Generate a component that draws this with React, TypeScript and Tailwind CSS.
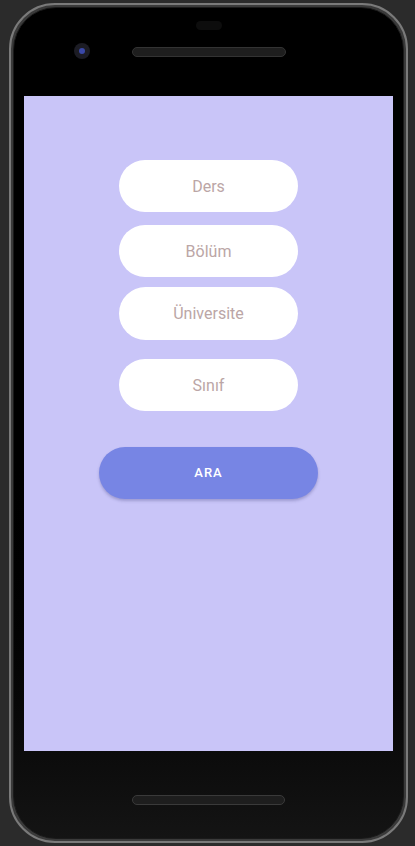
import { useState } from 'react';

const fields = [
  { key: 'ders', label: 'Ders', cls: 'mt-[64px] h-[52px]' },
  { key: 'bolum', label: 'Bölüm', cls: 'mt-[13px] h-[52px]' },
  { key: 'uni', label: 'Üniversite', cls: 'mt-[10px] h-[53px]' },
  { key: 'sinif', label: 'Sınıf', cls: 'mt-[19px] h-[52px]' },
];

function SearchScreen() {
  const [values, setValues] = useState<Record<string, string>>({});

  return (
    <div className="w-[369px] h-[655px] bg-[#c9c5f8] flex flex-col items-center">
      {fields.map((f) => (
        <input
          key={f.key}
          value={values[f.key] || ''}
          onChange={(e) => setValues({ ...values, [f.key]: e.target.value })}
          placeholder={f.label}
          className={`w-[179px] rounded-full bg-white text-center text-[16px] text-[#6b5b5b] placeholder:text-[#bba6a6] outline-none ${f.cls}`}
        />
      ))}
      <button className="mt-[36px] w-[219px] h-[52px] rounded-full bg-[#7785e4] text-white text-[13px] font-medium tracking-[0.08em] shadow-[0_2px_3px_rgba(60,60,120,0.3)]">
        ARA
      </button>
    </div>
  );
}

export default function App() {
  return (
    <div
      className="w-[415px] h-[846px] bg-[#2b2b2b] flex overflow-hidden"
      style={{ fontFamily: 'Roboto, "Noto Sans", sans-serif' }}
    >
      <div className="ml-[9px] mt-[3px] w-[399px] h-[840px] rounded-[46px] border-2 border-[#7a7a7a] bg-[#3a3a3a] p-[2px]">
        <div className="w-full h-full rounded-[43px] bg-gradient-to-b from-black via-black to-[#141414] border border-[#1a1a1a] flex flex-col items-center">
          {/* top bezel */}
          <div className="w-full h-[88px] flex flex-col items-center">
            <div className="mt-[13px] w-[26px] h-[9px] rounded-full bg-[#0d0d0d]" />
            <div className="relative w-full mt-[17px] h-[10px] flex justify-center">
              <div className="absolute left-[60px] top-[-4px] w-[16px] h-[16px] rounded-full bg-[#1c1c24] flex items-center justify-center">
                <div className="w-[6px] h-[6px] rounded-full bg-[#3a48a8]" />
              </div>
              <div className="w-[154px] h-[10px] rounded-full bg-[#1e1e1e] border border-[#333]" />
            </div>
          </div>
          <SearchScreen />
          {/* bottom bezel */}
          <div className="w-full flex justify-center">
            <div className="mt-[44px] w-[153px] h-[10px] rounded-full bg-[#1e1e1e] border border-[#3a3a3a]" />
          </div>
        </div>
      </div>
    </div>
  );
}
